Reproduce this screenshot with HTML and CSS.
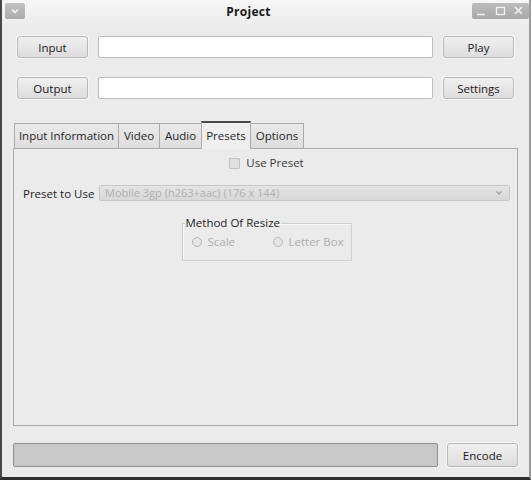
FILE: index.html
```html
<!DOCTYPE html>
<html>
<head>
<meta charset="utf-8">
<title>Project</title>
<link rel="stylesheet" href="styles.css">
</head>
<body>
<div class="window">
  <div class="titlebar">
    <div class="tb-left">
      <svg width="20" height="16" viewBox="0 0 20 16"><path d="M7 6.5 L10 9.5 L13 6.5" fill="none" stroke="#f4f4f4" stroke-width="1.6"/></svg>
    </div>
    <div class="title">Project</div>
    <div class="tb-right">
      <svg width="57" height="16" viewBox="0 0 57 16">
        <path d="M5 11.5 H13" stroke="#f2f2f2" stroke-width="1.6" fill="none"/>
        <rect x="24.5" y="4.5" width="8" height="7" stroke="#f2f2f2" stroke-width="1.3" fill="none"/>
        <path d="M43 4 L50 11 M50 4 L43 11" stroke="#f2f2f2" stroke-width="1.6" fill="none"/>
      </svg>
    </div>
  </div>

  <div class="row row-first">
    <button class="btn">Input</button>
    <div class="field"></div>
    <button class="btn">Play</button>
  </div>
  <div class="row row-second">
    <button class="btn">Output</button>
    <div class="field"></div>
    <button class="btn">Settings</button>
  </div>

  <div class="tabs">
    <div class="tab tab-info">Input Information</div>
    <div class="tab tab-video">Video</div>
    <div class="tab tab-audio">Audio</div>
    <div class="tab tab-presets active">Presets</div>
    <div class="tab tab-options">Options</div>
  </div>
  <div class="pane">
    <div class="check-row">
      <span class="checkbox"></span>
      <span class="check-label">Use Preset</span>
    </div>
    <div class="preset-row">
      <span class="preset-label">Preset to Use</span>
      <div class="combo">
        <span class="combo-text">Mobile 3gp (h263+aac) (176 x 144)</span>
        <svg class="combo-arrow" width="8" height="6" viewBox="0 0 8 6"><path d="M1.5 1.5 L4 4 L6.5 1.5" fill="none" stroke="#9a9a9a" stroke-width="1.2"/></svg>
      </div>
    </div>
    <fieldset class="group">
      <legend>Method Of Resize</legend>
      <div class="radios">
        <span class="radio-item radio-scale"><span class="radio"></span>Scale</span>
        <span class="radio-item"><span class="radio"></span>Letter Box</span>
      </div>
    </fieldset>
  </div>

  <div class="bottom-row">
    <div class="progress"></div>
    <button class="btn btn-encode">Encode</button>
  </div>
</div>
</body>
</html>
```
FILE: styles.css
```css
html, body {
  margin: 0;
  padding: 0;
  background: #3b3b3b;
}
body {
  width: 531px;
  height: 480px;
  overflow: hidden;
  font-family: "Open Sans", "Noto Sans", sans-serif;
  font-size: 11.5px;
  color: #262626;
}
.window {
  box-sizing: border-box;
  width: 531px;
  height: 480px;
  background: #ebebeb;
  border-left: 2px solid #474747;
  border-right: 2px solid #9c9c9c;
  border-bottom: 3px solid #2e2e2e;
  display: flex;
  flex-direction: column;
}
.titlebar {
  height: 25px;
  flex: none;
  display: flex;
  align-items: flex-start;
  padding: 3px 0 0 3px;
  box-sizing: border-box;
  background: linear-gradient(#f7f7f7, #ececec);
}
.tb-left {
  width: 20px;
  height: 16px;
  background: linear-gradient(#c2c2c2, #ababab);
  border-radius: 2px;
  display: flex;
}
.title {
  flex: 1;
  text-align: center;
  font-weight: bold;
  font-size: 12px;
  line-height: 17px;
  color: #1a1a1a;
  letter-spacing: 0.3px;
}
.tb-right {
  width: 57px;
  height: 16px;
  background: linear-gradient(#bdbdbd, #a8a8a8);
  border-radius: 2px;
  display: flex;
}
.row {
  display: flex;
  gap: 10px;
  padding: 0 15px;
  height: 22px;
  flex: none;
}
.row-first { margin-top: 11px; }
.row-second { margin-top: 19px; }
.btn {
  box-sizing: border-box;
  width: 71px;
  height: 22px;
  flex: none;
  font-family: "Open Sans", "Noto Sans", sans-serif;
  font-size: 11.5px;
  color: #202020;
  background: linear-gradient(#f0f0f0, #dddddd);
  border: 1px solid #b9b9b9;
  border-radius: 3px;
  box-shadow: 0 0 0 1px #f7f7f7;
  padding: 0;
}
.field {
  flex: 1;
  box-sizing: border-box;
  background: #ffffff;
  border: 1px solid #bdbdbd;
  border-radius: 2px;
}
.tabs {
  display: flex;
  margin: 22px 11px 0 11px;
  height: 27px;
  flex: none;
  align-items: flex-end;
  padding-left: 1px;
}
.tab {
  box-sizing: border-box;
  height: 25px;
  border: 1px solid #ababab;
  border-bottom: none;
  background: linear-gradient(#e9e9e9, #dedede);
  margin-right: -1px;
  text-align: center;
  line-height: 24px;
  color: #262626;
}
.tab-info { width: 105px; }
.tab-video { width: 42px; }
.tab-audio { width: 43px; }
.tab-presets { width: 50px; }
.tab-options { width: 54px; }
.tab.active {
  height: 28px;
  margin-bottom: -1px;
  background: #efefef;
  border-top: 2px solid #4a4a4a;
  line-height: 25px;
  position: relative;
  z-index: 1;
}
.pane {
  flex: none;
  height: 278px;
  box-sizing: border-box;
  margin: 0 11px;
  border: 1px solid #ababab;
  background: #ebebeb;
  padding: 8px 7px 0 9px;
  display: flex;
  flex-direction: column;
}
.check-row {
  display: flex;
  justify-content: center;
  align-items: center;
  height: 12px;
  gap: 6px;
}
.checkbox {
  box-sizing: border-box;
  width: 11px;
  height: 11px;
  border: 1px solid #c0c0c0;
  background: #e0e0e0;
  border-radius: 1px;
}
.check-label {
  line-height: 12px;
  color: #3a3a3a;
}
.preset-row {
  display: flex;
  align-items: center;
  margin-top: 16px;
  height: 16px;
}
.preset-label {
  width: 76px;
  flex: none;
  color: #1e1e1e;
  font-weight: 500;
}
.combo {
  flex: 1;
  box-sizing: border-box;
  height: 16px;
  background: linear-gradient(#e4e4e4, #d8d8d8);
  border: 1px solid #c8c8c8;
  border-radius: 2px;
  display: flex;
  align-items: center;
  padding: 0 6px 0 5px;
  overflow: hidden;
}
.combo-text {
  flex: 1;
  font-size: 11px;
  color: #b0b0b0;
  white-space: nowrap;
  line-height: 14px;
}
.combo-arrow { flex: none; }
.group {
  box-sizing: border-box;
  width: 170px;
  height: 45px;
  margin: 15px auto 0 auto;
  padding: 0;
  border: 1px solid #d0d0d0;
  box-shadow: inset 1px 1px 0 #f6f6f6;
}
.group legend {
  padding: 0 1px;
  margin-left: 2px;
  line-height: 14px;
  color: #222;
  font-weight: 500;
}
.radios {
  display: flex;
  padding: 5px 0 0 9px;
}
.radio-item {
  display: flex;
  align-items: center;
  gap: 6px;
  color: #ababab;
  line-height: 14px;
  white-space: nowrap;
}
.radio-scale { width: 81px; flex: none; }
.radio {
  box-sizing: border-box;
  width: 10px;
  height: 10px;
  border-radius: 50%;
  border: 1px solid #b8b8b8;
  background: #e6e6e6;
}
.bottom-row {
  display: flex;
  gap: 9px;
  margin: 17px 11px 0 11px;
  height: 24px;
  flex: none;
}
.progress {
  flex: 1;
  box-sizing: border-box;
  background: #c8c8c8;
  border: 1px solid #8f8f8f;
  border-radius: 2px;
}
.btn-encode {
  height: 24px;
}
```
